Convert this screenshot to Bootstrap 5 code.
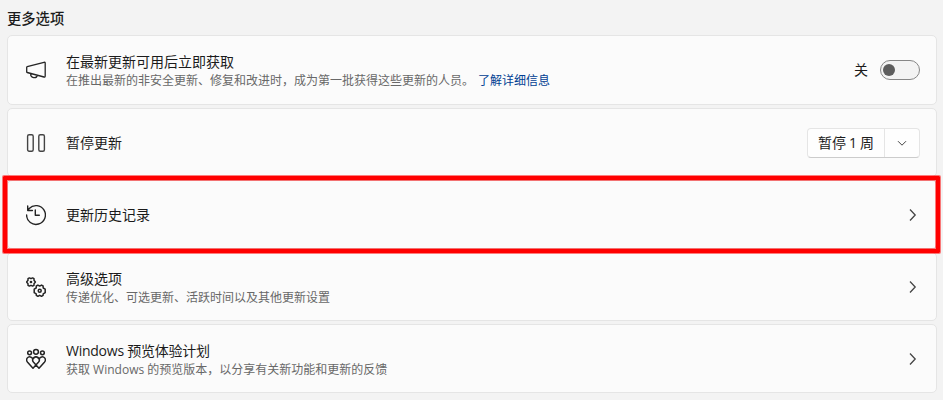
<!DOCTYPE html>
<html lang="zh-CN">
<head>
<meta charset="utf-8">
<meta name="viewport" content="width=device-width, initial-scale=1">
<title>更多选项</title>
<link href="https://cdn.jsdelivr.net/npm/bootstrap@5.3.0/dist/css/bootstrap.min.css" rel="stylesheet">
<style>
body{background:#f3f3f3;color:#1b1b1b;font:14px/18px "Open Sans","Noto Sans CJK SC",sans-serif;height:400px;overflow:hidden}
.settings{padding:0 6px 0 7px}
.heading{font:500 14.3px/20px "Noto Sans CJK SC",sans-serif;height:35px;padding-top:8px}
.option{height:69px;background:#fbfbfb;border:1px solid #e5e5e5;border-radius:5px;padding:0 16px 0 18px}
.option:first-child{height:70px}
.stack{gap:3px}
.glyph{width:20px;height:22px;margin-right:20px;flex:none;fill:none;stroke:#242424;stroke-width:1.3;stroke-linecap:round;stroke-linejoin:round}
.title{font-size:14px;line-height:18px;white-space:nowrap}
.latin{letter-spacing:-.25px}
.desc{font-size:12px;line-height:17px;color:#686868;white-space:nowrap}
.title + .desc{padding-top:1px}
.two-line{padding-top:2px}
.option:first-child .two-line{padding-top:1px}
.desc a{color:#003e92;margin-left:4px}
.switch{width:40px;height:20px;border:1px solid #868686;border-radius:10px;background:#f3f3f3;padding:3px 2px}
.knob{width:12px;height:12px;border-radius:50%;background:#5d5d5d}
.split{height:30px;border:1px solid #e5e5e5;border-bottom-color:#ccc;border-radius:4px;background:#fefefe}
.split button{border:0;background:none;padding:0;color:#1b1b1b;height:28px}
.split .pause{width:77px;border-right:1px solid #e5e5e5;word-spacing:-.7px}
.split .more{width:34px}
.chev{width:14px;height:14px;fill:none;stroke:#444;stroke-width:1.3}
.outline-box{left:3px;top:176px;width:937px;height:77px;border:4px solid #f00;border-radius:1px;box-shadow:0 0 0 1px rgba(255,0,0,.5),inset 0 0 0 1px rgba(255,0,0,.5)}
</style>
<script src="https://cdn.jsdelivr.net/npm/bootstrap@5.3.0/dist/js/bootstrap.bundle.min.js"></script>
</head>
<body>
<main class="settings position-relative">
<h1 class="heading m-0">更多选项</h1>
<div class="stack d-flex flex-column">
  <section class="option d-flex align-items-center">
    <svg class="glyph" viewBox="0 0 20 22"><path d="M1.2 7.7 18 3.3q1.2-.3 1.2.9v12.9q0 1.2-1.2.9L1.2 13.5q-.5-.1-.5-.5V8.2q0-.4.5-.5ZM4.6 14.7c-.1 4.7 6 5 6.6 1.6"/></svg>
    <div class="two-line flex-grow-1"><div class="title">在最新更新可用后立即获取</div><div class="desc">在推出最新的非安全更新、修复和改进时，成为第一批获得这些更新的人员。<a href="#" class="text-decoration-none">了解详细信息</a></div></div>
    <span class="me-2 pe-1">关</span>
    <div class="switch" role="switch" aria-checked="false"><div class="knob"></div></div>
  </section>
  <section class="option d-flex align-items-center">
    <svg class="glyph" viewBox="0 0 20 22"><g stroke="#444" stroke-width="1.4"><rect x="1.6" y="2.7" width="5.6" height="16.6" rx="1.5"/><rect x="12.8" y="2.7" width="5.6" height="16.6" rx="1.5"/></g></svg>
    <div class="title flex-grow-1">暂停更新</div>
    <div class="split d-flex"><button class="pause">暂停 1 周</button><button class="more d-flex align-items-center justify-content-center" aria-label="更多"><svg class="chev" viewBox="0 0 14 14"><path d="m3 5.2 4 4 4-4" stroke-width="1"/></svg></button></div>
  </section>
  <section class="option d-flex align-items-center">
    <svg class="glyph" viewBox="0 0 20 22"><path d="M.6 11a9.4 9.4 0 1 0 2.6-6.5L1.7 6.2M1.7 2v4.5h4.7M9.3 6v5.2h4" stroke-width="1.4"/></svg>
    <div class="title flex-grow-1">更新历史记录</div>
    <svg class="chev" viewBox="0 0 14 14"><path d="m4 1.5 5.2 5.5L4 12.5"/></svg>
  </section>
  <section class="option d-flex align-items-center">
    <svg class="glyph" viewBox="0 0 20 22"><g stroke-width="1.5"><path d="M3.4 1.9 5 2.7l1.6-.8L8 2.7v1.6l1.4 1.7L8 7.7v1.6l-1.4.8L5 9.3l-1.6.8L2 9.3V7.7L.6 6 2 4.3V2.7Z"/><circle cx="5" cy="6" r=".6"/><path d="m11.9 9.1 1.8 1 1.8-1 1.6.9.1 2 2 1.1v3.6l-2 1.1-.1 1.6-1.6.9-1.8-1-1.8 1-1.6-.9-.1-1.6-2-1.1v-3.6l2-1.1.1-2Z"/><circle cx="13.7" cy="14.8" r="1.5"/></g></svg>
    <div class="two-line flex-grow-1"><div class="title">高级选项</div><div class="desc">传递优化、可选更新、活跃时间以及其他更新设置</div></div>
    <svg class="chev" viewBox="0 0 14 14"><path d="m4 1.5 5.2 5.5L4 12.5"/></svg>
  </section>
  <section class="option d-flex align-items-center">
    <svg class="glyph" viewBox="0 0 20 22"><g stroke-width="1.5"><circle cx="3.6" cy="4.8" r="1.9"/><circle cx="10" cy="3.8" r="2.4"/><circle cx="16.4" cy="4.8" r="1.9"/><path d="m7 20.3-5.4-6C-1 11.2 2.3 7.3 5.3 9.3L7 10.9l1.7-1.6c3-2 6.3 1.9 3.7 5ZM10.2 17.2l2.8 3.1 5.4-6c2.6-3.1-.7-7-3.7-5L13 10.9l-1.7-1.6c-3-2-6.3 1.9-3.7 5l2.6 2.9"/></g></svg>
    <div class="two-line flex-grow-1"><div class="title latin">Windows 预览体验计划</div><div class="desc">获取 Windows 的预览版本，以分享有关新功能和更新的反馈</div></div>
    <svg class="chev" viewBox="0 0 14 14"><path d="m4 1.5 5.2 5.5L4 12.5"/></svg>
  </section>
</div>
<div class="outline-box position-absolute"></div>
</main>
</body>
</html>
